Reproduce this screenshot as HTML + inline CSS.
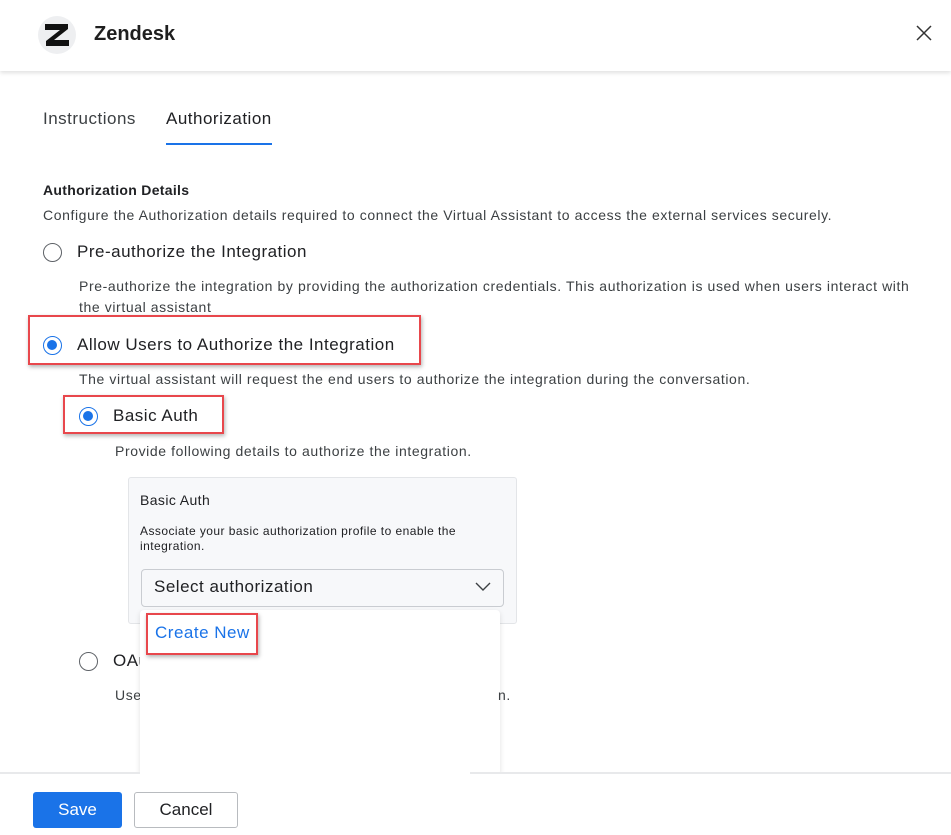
<!DOCTYPE html>
<html><head><meta charset="utf-8"><style>
*{margin:0;padding:0;box-sizing:border-box}
body{width:951px;height:835px;overflow:hidden;background:#fff;font-family:"Liberation Sans",sans-serif;color:#202124;position:relative}
.a{position:absolute;white-space:nowrap}
.hdr{position:absolute;left:0;top:0;width:951px;height:71px;background:#fff;box-shadow:0 2px 4px rgba(0,0,0,.12)}
.radio{position:absolute;width:19px;height:19px;border-radius:50%;border:1.5px solid #5f6368;background:#fff}
.radio.on{border-color:#1a73e8}
.radio.on::after{content:"";position:absolute;left:3px;top:3px;width:10px;height:10px;border-radius:50%;background:#1a73e8}
.red{position:absolute;border:2.5px solid #e8474c;box-shadow:1px 2px 4px rgba(0,0,0,.3)}
.t14{font-size:14px;color:#3c4043;letter-spacing:0.6px}
.t17{font-size:17px;letter-spacing:0.5px}
</style></head><body>
<div class="hdr"></div>
<div class="a" style="left:38px;top:16px;width:38px;height:38px;border-radius:50%;background:#eeeff1"></div>
<svg class="a" style="left:45px;top:24px" width="24" height="22" viewBox="0 0 24 22"><path d="M0 0H23V5L9 16H24V22H1V17L15 6H0z" fill="#111"/></svg>
<div class="a" style="left:94px;top:23px;font-size:20px;font-weight:bold;color:#1f1f1f">Zendesk</div>
<svg class="a" style="left:916px;top:25px" width="16" height="16" viewBox="0 0 16 16"><path d="M1 1L15 15M15 1L1 15" stroke="#333" stroke-width="1.5"/></svg>

<div class="a t17" style="left:43px;top:109px;color:#3c4043">Instructions</div>
<div class="a t17" style="left:166px;top:109px;color:#202124">Authorization</div>
<div class="a" style="left:166px;top:143px;width:106px;height:2px;background:#1a73e8"></div>

<div class="a" style="left:43px;top:182px;font-size:14px;font-weight:bold;letter-spacing:0.3px">Authorization Details</div>
<div class="a t14" style="left:43px;top:207px">Configure the Authorization details required to connect the Virtual Assistant to access the external services securely.</div>

<div class="radio" style="left:43px;top:243px"></div>
<div class="a t17" style="left:77px;top:242px">Pre-authorize the Integration</div>
<div class="a t14" style="left:79px;top:278px">Pre-authorize the integration by providing the authorization credentials. This authorization is used when users interact with</div>
<div class="a t14" style="left:79px;top:299px">the virtual assistant</div>

<div class="red" style="left:28px;top:315px;width:393px;height:50px"></div>
<div class="radio on" style="left:43px;top:336px"></div>
<div class="a t17" style="left:77px;top:335px">Allow Users to Authorize the Integration</div>
<div class="a t14" style="left:79px;top:371px">The virtual assistant will request the end users to authorize the integration during the conversation.</div>

<div class="red" style="left:63px;top:395px;width:161px;height:39px"></div>
<div class="radio on" style="left:79px;top:407px"></div>
<div class="a t17" style="left:113px;top:406px">Basic Auth</div>
<div class="a t14" style="left:115px;top:443px">Provide following details to authorize the integration.</div>

<div class="a" style="left:128px;top:477px;width:389px;height:147px;background:#f7f8fa;border:1px solid #e3e5e8;border-radius:3px"></div>
<div class="a" style="left:140px;top:492px;font-size:14px;color:#202124;letter-spacing:0.4px">Basic Auth</div>
<div class="a" style="left:140px;top:524px;font-size:12px;line-height:15px;color:#202124;letter-spacing:0.45px">Associate your basic authorization profile to enable the<br>integration.</div>
<div class="a" style="left:141px;top:569px;width:363px;height:38px;background:#f7f8fa;border:1px solid #c9ccd1;border-radius:4px"></div>
<div class="a t17" style="left:154px;top:577px;color:#202124">Select authorization</div>
<svg class="a" style="left:475px;top:582px" width="16" height="10" viewBox="0 0 16 10"><path d="M1 1l7 7 7-7" fill="none" stroke="#3c4043" stroke-width="1.4"/></svg>

<div class="radio" style="left:79px;top:652px"></div>
<div class="a t17" style="left:113px;top:651px">OAuth</div>
<div class="a t14" style="left:115px;top:687px">Use OAuth to authorize the integration.</div>

<div class="a" style="left:140px;top:610px;width:360px;height:165px;background:#fff;border-radius:4px;box-shadow:0 2px 6px rgba(0,0,0,.12)"></div>
<div class="a t14" style="left:498px;top:687px">n.</div>
<div class="red" style="left:146px;top:613px;width:112px;height:42px"></div>
<div class="a t17" style="left:155px;top:623px;color:#1a73e8">Create New</div>

<div class="a" style="left:0;top:772px;width:951px;height:63px;background:#fff;border-top:2px solid #e8e9eb"></div>
<div class="a" style="left:140px;top:770px;width:330px;height:4px;background:#fff"></div>
<div class="a" style="left:33px;top:792px;width:89px;height:36px;background:#1a73e8;border-radius:3px;color:#fff;font-size:17px;text-align:center;line-height:36px">Save</div>
<div class="a" style="left:134px;top:792px;width:104px;height:36px;border:1px solid #b8bbbf;border-radius:3px;color:#202124;font-size:17px;text-align:center;line-height:34px">Cancel</div>
</body></html>
